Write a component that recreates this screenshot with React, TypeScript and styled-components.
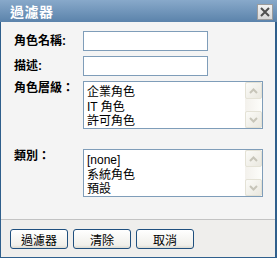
import React from "react";
import styled, { createGlobalStyle } from "styled-components";

const GlobalStyle = createGlobalStyle`
  html, body {
    margin: 0;
    padding: 0;
    background: #ffffff;
  }
  body {
    font-family: "Liberation Sans", "Noto Sans CJK TC", sans-serif;
    font-size: 12px;
    color: #000000;
  }
`;

const kFont = `"Liberation Sans", "Noto Sans CJK TC", sans-serif`;

const Window = styled.div`
  box-sizing: border-box;
  width: 277px;
  height: 258px;
  display: flex;
  flex-direction: column;
  border: 1px solid #2f5f8c;
  border-top: none;
  border-right-width: 2px;
  background: #f4f4f4;
  font-family: ${kFont};
`;

const TitleBar = styled.div`
  flex: 0 0 22px;
  display: flex;
  align-items: center;
  justify-content: space-between;
  padding: 0 4px 0 10px;
  margin: 0 -2px 0 -1px;
  background: linear-gradient(#88a9ca, #5b83ab);
`;

const Title = styled.span`
  color: #ffffff;
  font-size: 14px;
  font-weight: bold;
  letter-spacing: 0.5px;
`;

const CloseButton = styled.div`
  box-sizing: border-box;
  width: 16px;
  height: 16px;
  display: flex;
  align-items: center;
  justify-content: center;
  border: 1px solid #9c9c9c;
  background: linear-gradient(#f2f2f2, #d9d9d9);
  margin-top: 1px;
`;

const Body = styled.div`
  flex: 1;
  padding: 9px 13px 0 13px;
`;

const Form = styled.div`
  display: grid;
  grid-template-columns: 69px auto;
  row-gap: 5px;
  justify-items: start;
`;

const Label = styled.div<{ $top?: boolean; $gap?: boolean }>`
  font-size: 12px;
  font-weight: bold;
  line-height: 14px;
  align-self: ${p => (p.$top ? "start" : "center")};
  margin-top: ${p => (p.$gap ? "15px" : "0")};
  white-space: nowrap;
`;

const TextInput = styled.input.attrs({ type: "text" })`
  box-sizing: border-box;
  width: 125px;
  height: 20px;
  margin: 0;
  padding: 0 3px;
  border: 1px solid #7f9db9;
  background: #ffffff;
  outline: none;
  font-family: ${kFont};
  font-size: 12px;
`;

const ListFrame = styled.div<{ $gap?: boolean }>`
  box-sizing: border-box;
  width: 180px;
  height: 48px;
  display: flex;
  border: 1px solid #7f9db9;
  background: #ffffff;
  margin-top: ${p => (p.$gap ? "15px" : "0")};
`;

const ListItems = styled.div`
  flex: 1;
  padding: 3px 3px 0 3px;
  overflow: hidden;
`;

const ListItem = styled.div`
  font-size: 12px;
  line-height: 14.5px;
  white-space: nowrap;
`;

const ScrollTrack = styled.div`
  width: 17px;
  display: flex;
  flex-direction: column;
  justify-content: space-between;
  background: linear-gradient(90deg, #f3f1ec, #fdfdfa);
`;

const ScrollButton = styled.div`
  box-sizing: border-box;
  width: 17px;
  height: 17px;
  display: flex;
  align-items: center;
  justify-content: center;
  border: 1px solid #e4e2d6;
  border-radius: 2px;
  background: linear-gradient(135deg, #fbfbf8, #eae8df);
`;

const Footer = styled.div`
  flex: 0 0 38px;
  box-sizing: border-box;
  display: flex;
  gap: 5px;
  padding: 9px 0 0 9px;
  border-top: 1px solid #c3c3c3;
  background: #efeeec;
`;

const Button = styled.button`
  box-sizing: border-box;
  width: 58px;
  height: 20px;
  margin: 0;
  padding: 0;
  border: 1px solid #1f4f7e;
  border-radius: 3px;
  background: linear-gradient(#ffffff, #f0efea 85%, #dcdad0);
  font-family: ${kFont};
  font-size: 12px;
  color: #000000;
`;

function Arrow({ up }: { up?: boolean }) {
  return (
    <svg width="9" height="6" viewBox="0 0 9 6">
      <path
        d={up ? "M1 5 L4.5 1.5 L8 5" : "M1 1 L4.5 4.5 L8 1"}
        fill="none"
        stroke="#c7c5b9"
        strokeWidth="2"
      />
    </svg>
  );
}

function ListBox({ items, gap }: { items: string[]; gap?: boolean }) {
  return (
    <ListFrame $gap={gap}>
      <ListItems>
        {items.map(item => (
          <ListItem key={item}>{item}</ListItem>
        ))}
      </ListItems>
      <ScrollTrack>
        <ScrollButton>
          <Arrow up />
        </ScrollButton>
        <ScrollButton>
          <Arrow />
        </ScrollButton>
      </ScrollTrack>
    </ListFrame>
  );
}

export default function App() {
  return (
    <>
      <GlobalStyle />
      <Window>
        <TitleBar>
          <Title>過濾器</Title>
          <CloseButton>
            <svg width="10" height="10" viewBox="0 0 10 10">
              <path d="M1 1 L9 9 M9 1 L1 9" stroke="#505050" strokeWidth="2" />
            </svg>
          </CloseButton>
        </TitleBar>
        <Body>
          <Form>
            <Label>角色名稱:</Label>
            <TextInput />
            <Label>描述:</Label>
            <TextInput />
            <Label $top>角色層級：</Label>
            <ListBox items={["企業角色", "IT 角色", "許可角色"]} />
            <Label $top $gap>類別：</Label>
            <ListBox gap items={["[none]", "系統角色", "預設"]} />
          </Form>
        </Body>
        <Footer>
          <Button>過濾器</Button>
          <Button>清除</Button>
          <Button>取消</Button>
        </Footer>
      </Window>
    </>
  );
}
